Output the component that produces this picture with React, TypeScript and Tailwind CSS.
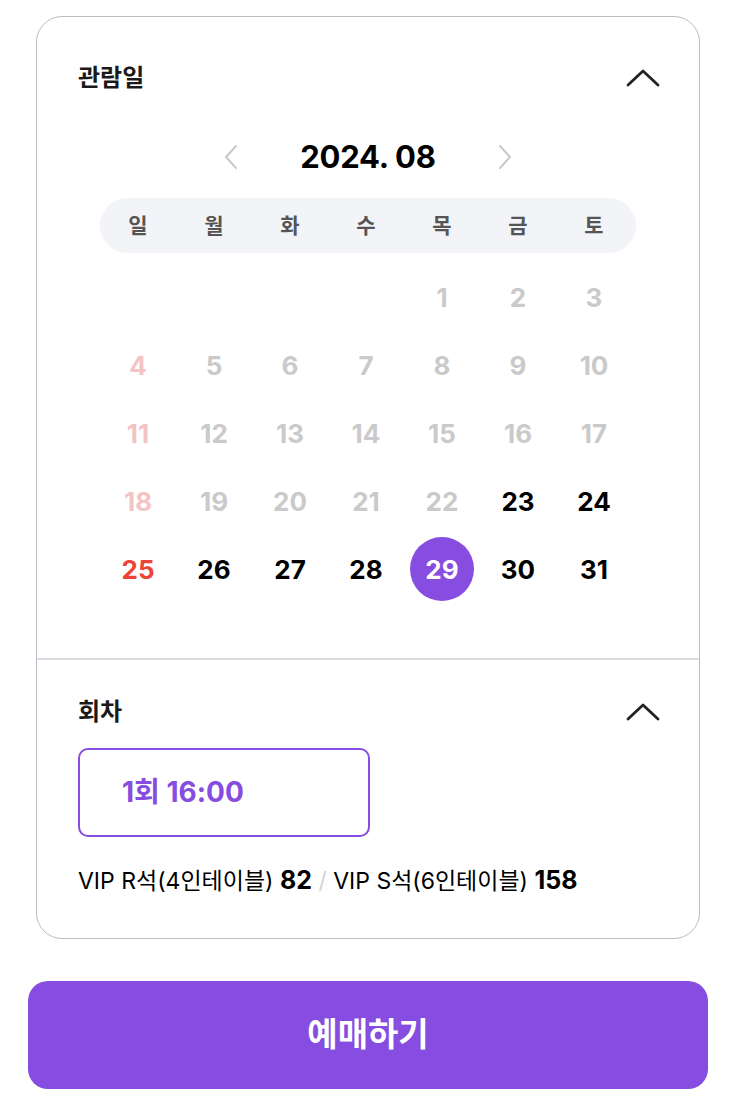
import React, { useState } from "react";

const FONT = { fontFamily: 'Inter, "Noto Sans CJK KR", sans-serif' };

type Day = { n: number; tone: "muted" | "mutedSun" | "active" | "sun" };

const buildDays = (): (Day | null)[] => {
  const cells: (Day | null)[] = [null, null, null, null];
  for (let n = 1; n <= 31; n++) {
    const col = (n + 3) % 7;
    const sunday = col === 0;
    const open = n >= 23;
    cells.push({
      n,
      tone: open ? (sunday ? "sun" : "active") : sunday ? "mutedSun" : "muted",
    });
  }
  return cells;
};

const toneClass: Record<Day["tone"], string> = {
  muted: "text-[#cacaca]",
  mutedSun: "text-[#f4c4c4]",
  active: "text-black",
  sun: "text-[#ee4338]",
};

const ChevronUp = () => (
  <svg width="34" height="20" viewBox="0 0 34 20" fill="none">
    <path d="M2 17L17 3L32 17" stroke="#222" strokeWidth="2.8" strokeLinecap="round" strokeLinejoin="round" />
  </svg>
);

const ChevronSide = ({ dir }: { dir: "left" | "right" }) => (
  <svg width="14" height="26" viewBox="0 0 14 26" fill="none">
    <path
      d={dir === "left" ? "M12 2L2 13L12 24" : "M2 2L12 13L2 24"}
      stroke="#c9c9c9"
      strokeWidth="2"
      strokeLinecap="round"
      strokeLinejoin="round"
    />
  </svg>
);

export default function App() {
  const [selected, setSelected] = useState(29);
  const days = buildDays();
  const weekdays = ["일", "월", "화", "수", "목", "금", "토"];

  return (
    <div className="w-[734px] min-h-[1104px] bg-white pt-[16px]" style={FONT}>
      {/* Card */}
      <div className="ml-[36px] w-[664px] rounded-[26px] border-[1.5px] border-[#b9bcc4] bg-white">
        {/* 관람일 */}
        <div className="px-[41px] pt-[44px] pb-[55px]">
          <div className="flex h-[34px] items-center justify-between">
            <span className="text-[24px] font-bold text-[#1a1a1a]">관람일</span>
            <span className="mr-[-2px]">
              <ChevronUp />
            </span>
          </div>

          <div className="mt-[42px] flex h-[40px] items-center justify-center gap-[62px]">
            <ChevronSide dir="left" />
            <span className="text-[31px] font-bold tracking-[-0.2px] text-black">2024. 08</span>
            <ChevronSide dir="right" />
          </div>

          <div className="mx-[22px] mt-[21px] h-[55px] rounded-full bg-[#f3f4f8]">
            <div className="grid h-full w-[532px] grid-cols-7 items-center">
              {weekdays.map((w) => (
                <span key={w} className="text-center text-[21px] font-bold text-[#555]">
                  {w}
                </span>
              ))}
            </div>
          </div>

          <div className="ml-[22px] mt-[10px] grid w-[532px] grid-cols-7">
            {days.map((d, i) =>
              d ? (
                <div key={i} className="flex h-[68px] items-center justify-center">
                  {d.n === selected ? (
                    <span className="flex h-[64px] w-[64px] items-center justify-center rounded-full bg-[#874ce0] text-[26px] font-bold text-white">
                      {d.n}
                    </span>
                  ) : (
                    <button
                      onClick={() => (d.tone === "active" || d.tone === "sun") && setSelected(d.n)}
                      className={`text-[26px] font-bold ${toneClass[d.tone]}`}
                    >
                      {d.n}
                    </button>
                  )}
                </div>
              ) : (
                <div key={i} className="h-[68px]" />
              )
            )}
          </div>
        </div>

        <div className="h-[1.5px] bg-[#dadce1]" />

        {/* 회차 */}
        <div className="px-[41px] pt-[35px] pb-[43px]">
          <div className="flex h-[34px] items-center justify-between">
            <span className="text-[24px] font-bold text-[#1a1a1a]">회차</span>
            <span className="mr-[-2px]">
              <ChevronUp />
            </span>
          </div>

          <button className="mt-[19px] flex h-[89px] w-[292px] items-center rounded-[10px] border-2 border-[#874ce0] pl-[42px] text-[28px] font-bold text-[#874ce0]">
            1회 16:00
          </button>

          <p className="mt-[29px] text-[23px] leading-[28px] text-black">
            VIP R석(4인테이블) <b className="text-[25px] font-bold">82</b>{" "}
            <span className="text-[#d4d4d4]">/</span> VIP S석(6인테이블){" "}
            <b className="text-[25px] font-bold">158</b>
          </p>
        </div>
      </div>

      {/* 예매하기 */}
      <button className="ml-[28px] mt-[42px] flex h-[108px] w-[680px] items-center justify-center rounded-[20px] bg-[#874ce0] text-[33px] font-bold text-white">
        예매하기
      </button>
    </div>
  );
}
